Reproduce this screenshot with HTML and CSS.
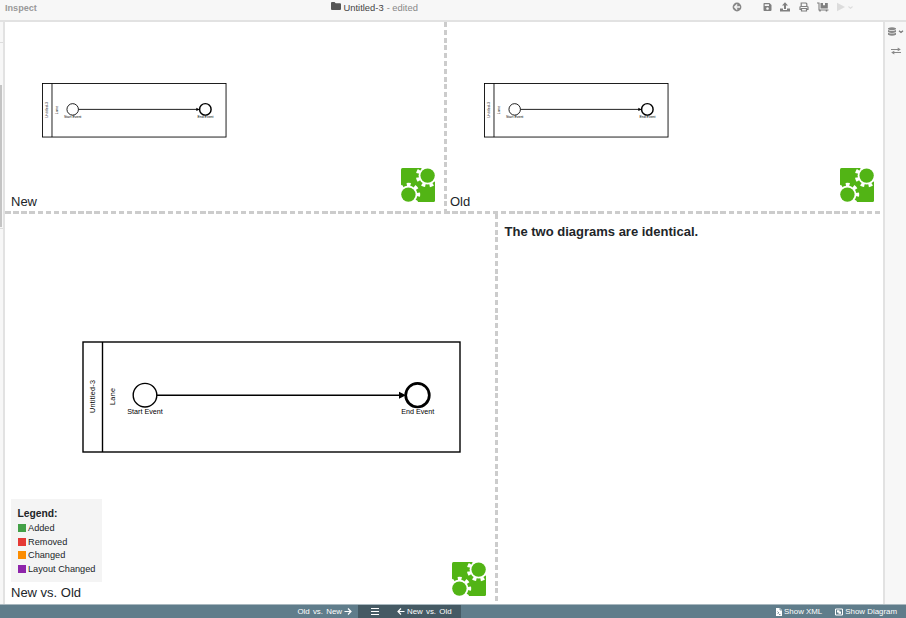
FILE: index.html
```html
<!DOCTYPE html>
<html lang="en">
<head>
<meta charset="utf-8">
<title>Inspect</title>
<link rel="stylesheet" href="styles.css">
</head>
<body>
<svg class="defs" width="0" height="0" aria-hidden="true">
  <symbol id="gears" viewBox="0 0 34 34">
    <path fill="#52b415" d="M1.500 0H20L34 14V32.500Q34 34 32.500 34H14L0 19V1.500Q0 0 1.500 0Z"/>
    <g fill="#fff">
      <circle cx="26.600" cy="7.600" r="9"/>
      <circle cx="7.400" cy="26.600" r="9"/>
    </g>
    <g fill="none" stroke="#fff" stroke-width="3.600" stroke-dasharray="3.700 4.154">
      <circle cx="26.600" cy="7.600" r="10" transform="rotate(12 26.600 7.600)"/>
      <circle cx="7.400" cy="26.600" r="10" transform="rotate(-10.600 7.400 26.600)"/>
    </g>
    <g fill="#52b415">
      <circle cx="26.600" cy="7.600" r="7.200"/>
      <circle cx="7.400" cy="26.600" r="7.200"/>
    </g>
  </symbol>
</svg>

<div class="app">
  <header class="topbar">
    <span class="brand">Inspect</span>
    <div class="doc">
      <svg width="10" height="8" viewBox="0 0 10 8"><path fill="#555" d="M0 1Q0 0 1 0H3.500L4.700 1.200H9Q10 1.200 10 2.200V7Q10 8 9 8H1Q0 8 0 7Z"/></svg>
      <span class="doc-name">Untitled-3</span><span class="doc-state">- edited</span>
    </div>
    <div class="tools">
      <svg class="back" width="10" height="10" viewBox="0 0 10 10"><circle cx="5" cy="5" r="4.400" fill="#888"/><path d="M8 5H2.700M5.200 2.500L2.700 5L5.200 7.500" fill="none" stroke="#f7f7f7" stroke-width="1.300"/></svg>
      <svg width="9" height="10" viewBox="0 0 9 10"><path fill="#808080" fill-rule="evenodd" d="M1.300 1H6.500L8.500 3V8Q8.500 9 7.500 9H1.300Q.5 9 .5 8V1.800Q.5 1 1.300 1ZM1.700 2.200V4H6V2.200ZM4.500 5.200A1.300 1.300 0 1 0 4.510 5.200Z"/></svg>
      <svg width="10" height="10" viewBox="0 0 10 10"><path fill="#808080" d="M5 .3L8 3.600H6V7H4V3.600H2ZM0 6.500H3V8H7V6.500H10V9.500H0Z"/></svg>
      <svg width="10" height="10" viewBox="0 0 10 10"><path fill="none" stroke="#808080" stroke-width="1.200" d="M2.200 4.500V1H7L7.800 1.800V4.500M2.200 7.300H1V5.200Q1 4.500 1.700 4.500H8.300Q9 4.500 9 5.200V7.300H7.800M2.500 6.500H7.500V9H2.500Z"/></svg>
      <svg width="12" height="10" viewBox="0 0 12 10"><path fill="none" stroke="#808080" stroke-width="1.100" d="M0 1H2V8H11.500"/><path fill="#808080" d="M3.500 1H6V3.500L7 3L8 3.500V1H10.800V6.500H3.500Z"/><circle cx="3" cy="8.700" r=".9" fill="#808080"/><circle cx="9.500" cy="8.700" r=".9" fill="#808080"/></svg>
      <svg class="run" width="17" height="10" viewBox="0 0 17 10"><path fill="#dcdcdc" d="M0 .8L8 5L0 9.200Z"/><path d="M11.500 4.500L13.500 6.300L15.500 4.500" fill="none" stroke="#dcdcdc" stroke-width="1.100"/></svg>
    </div>
  </header>

  <div class="body">
    <div class="gutter"><div class="gutter-head"></div><div class="gutter-scroll"></div><div class="gutter-foot"></div></div>
    <main class="workspace">
      <div class="row upper">
        <section class="pane pane-new">
          <svg class="diagram mini" viewBox="0 0 382 114">
            <rect x="1" y="1" width="377" height="110"/>
            <path d="M20.500 1v110"/>
            <circle cx="63" cy="54.200" r="11.800"/>
            <path d="M75 54.200H319"/>
            <circle class="end" cx="335.500" cy="54.200" r="11.800"/>
            <path class="tip" d="M317 50.700L324 54.200L317 57.700Z"/>
            <text transform="translate(13 55.500) rotate(-90)" textLength="33">Untitled-3</text>
            <text transform="translate(32.800 55.500) rotate(-90)" textLength="17">Lane</text>
            <text x="63" y="72.800" textLength="35.500">Start Event</text>
            <text x="335.800" y="72.800" textLength="33">End Event</text>
          </svg>
          <div class="pane-foot"><span class="caption">New</span><svg class="logo"><use href="#gears"/></svg></div>
        </section>
        <div class="split-v"></div>
        <section class="pane pane-old">
          <svg class="diagram mini" viewBox="0 0 382 114">
            <rect x="1" y="1" width="377" height="110"/>
            <path d="M20.500 1v110"/>
            <circle cx="63" cy="54.200" r="11.800"/>
            <path d="M75 54.200H319"/>
            <circle class="end" cx="335.500" cy="54.200" r="11.800"/>
            <path class="tip" d="M317 50.700L324 54.200L317 57.700Z"/>
            <text transform="translate(13 55.500) rotate(-90)" textLength="33">Untitled-3</text>
            <text transform="translate(32.800 55.500) rotate(-90)" textLength="17">Lane</text>
            <text x="63" y="72.800" textLength="35.500">Start Event</text>
            <text x="335.800" y="72.800" textLength="33">End Event</text>
          </svg>
          <div class="pane-foot"><span class="caption">Old</span><svg class="logo"><use href="#gears"/></svg></div>
        </section>
      </div>
      <div class="split-h"></div>
      <div class="row lower">
        <section class="pane pane-diff">
          <svg class="diagram large" viewBox="0 0 382 114">
            <rect x="1" y="1" width="377" height="110"/>
            <path d="M20.500 1v110"/>
            <circle cx="63" cy="54.200" r="11.800"/>
            <path d="M75 54.200H319"/>
            <circle class="end" cx="335.500" cy="54.200" r="11.800"/>
            <path class="tip" d="M317 50.700L324 54.200L317 57.700Z"/>
            <text transform="translate(13 55.500) rotate(-90)" textLength="33">Untitled-3</text>
            <text transform="translate(32.800 55.500) rotate(-90)" textLength="17">Lane</text>
            <text x="63" y="72.800" textLength="35.500">Start Event</text>
            <text x="335.800" y="72.800" textLength="33">End Event</text>
          </svg>
          <div class="pane-foot">
            <div>
              <div class="legend">
                <h2>Legend:</h2>
                <ul>
                  <li><i class="added"></i>Added</li>
                  <li><i class="removed"></i>Removed</li>
                  <li><i class="changed"></i>Changed</li>
                  <li><i class="layout"></i>Layout Changed</li>
                </ul>
              </div>
              <span class="caption">New vs. Old</span>
            </div>
            <svg class="logo"><use href="#gears"/></svg>
          </div>
        </section>
        <div class="split-v"></div>
        <section class="pane result"><h1>The two diagrams are identical.</h1></section>
      </div>
    </main>
    <aside class="rail">
      <svg width="16" height="9" viewBox="0 0 16 9"><path fill="#888" d="M0 1.200Q4 -.8 8 1.200V2.200Q4 4 0 2.200ZM0 2.900Q4 4.700 8 2.900V5Q4 6.800 0 5ZM0 5.700Q4 7.500 8 5.700V7.700Q4 9.700 0 7.700Z"/><path d="M11 3.700L13 5.500L15 3.700" fill="none" stroke="#777" stroke-width="1.200"/></svg>
      <svg class="swap" width="10" height="8" viewBox="0 0 10 8"><path d="M0 2.500H7M10 5.500H3" fill="none" stroke="#888" stroke-width="1.100"/><path fill="#888" d="M6.700 .5L9.800 2.500L6.700 4.300ZM3.300 3.700L.2 5.500L3.300 7.500Z"/></svg>
    </aside>
  </div>

  <footer class="statusbar">
    <div class="old-new">Old vs. New <svg width="8" height="8" viewBox="0 0 8 8"><path d="M.5 3.500H7M4 .5L7 3.500L4 6.500" fill="none" stroke="#fff" stroke-width="1.200"/></svg></div>
    <div class="active">
      <svg width="8" height="7" viewBox="0 0 8 7"><path d="M0 .5H8M0 3.500H8M0 6.500H8" stroke="#fff"/></svg>
      <span class="new-old"><svg width="8" height="8" viewBox="0 0 8 8"><path d="M7.500 3.500H1M4 .5L1 3.500L4 6.500" fill="none" stroke="#fff" stroke-width="1.200"/></svg>New vs. Old</span>
    </div>
    <div class="actions">
      <span><svg width="6" height="8" viewBox="0 0 6 8"><path fill="#fff" d="M0 0H4L6 2V8H0Z"/><path d="M1.500 3.500L3 5M1.500 6L2.500 5M3 6.500H4.500M4 0V2H6" fill="none" stroke="#607d8b" stroke-width=".8"/></svg>Show XML</span>
      <span><svg width="8" height="8" viewBox="0 0 8 8"><path d="M.5 1H7.500V7H.5Z" fill="none" stroke="#fff"/><path fill="#fff" d="M2 2.200H4.500V3.500H6V5.800H3.500V4.500H2Z"/></svg>Show Diagram</span>
    </div>
  </footer>
</div>
</body>
</html>
```
FILE: styles.css
```css
* { box-sizing: border-box; }
body {
  margin: 0;
  font-family: "Liberation Sans", Arial, sans-serif;
  color: #212529;
  background: #fff;
}
svg { display: block; flex: none; }
.defs { position: absolute; }
.app {
  width: 906px;
  height: 618px;
  display: grid;
  grid-template-rows: 22px 1fr 14px;
  overflow: hidden;
}
.topbar {
  display: grid;
  grid-template-columns: 331px 1fr 174px;
  background: #f7f7f7;
  border-bottom: 2px solid #e2e2e2;
  height: 22px;
}
.brand {
  padding-left: 5px;
  font-size: 9.1px;
  line-height: 16px;
  font-weight: bold;
  color: #999;
}
.doc {
  display: flex;
  align-items: center;
  height: 14px;
  font-size: 9.4px;
  color: #888;
}
.doc svg { margin-top: -2px; }
.doc-name { margin: 0 3px 0 2.500px; color: #444; }
.tools {
  display: flex;
  align-items: center;
  gap: 8.4px;
  height: 14px;
}
.back { margin-right: 12.500px; }
.body {
  display: grid;
  grid-template-columns: 5px 878px 23px;
  min-height: 0;
}
.gutter {
  background: #f7f7f7;
  border-right: 2px solid #e2e2e2;
  display: flex;
  flex-direction: column;
}
.gutter-head { height: 21px; border-bottom: 1px solid #ddd; }
.gutter-scroll {
  width: 1.5px;
  height: 142px;
  margin-top: 42px;
  background: #c4c4c4;
}
.gutter-foot { border-bottom: 1px solid #ddd; height: 2px; }
.workspace {
  display: grid;
  grid-template-rows: 189px 3px 1fr;
  min-height: 0;
}
.row { display: grid; min-height: 0; }
.upper { grid-template-columns: 439px 3px 1fr; }
.lower { grid-template-columns: 490px 3px 1fr; }
.split-v { background: repeating-linear-gradient(to bottom, #ccc 0 5px, #fff 5px 7.8px); }
.split-h { background: repeating-linear-gradient(to right, #ccc 0 5.500px, #fff 5.500px 8.130px); }
.pane {
  display: flex;
  flex-direction: column;
  justify-content: space-between;
}
.diagram { fill: none; stroke: #000; stroke-width: 1.4; overflow: visible; }
.diagram .end { stroke-width: 2.7; }
.diagram .tip { fill: #000; stroke: none; }
.diagram text {
  fill: #000;
  stroke: none;
  font-size: 7.2px;
  text-anchor: middle;
}
.mini {
  width: 186px;
  height: 55.5px;
  margin: 61px 0 0 37px;
  stroke-width: 1.800;
}
.mini .end { stroke-width: 3; }
.large { width: 382px; height: 114px; margin: 127px 0 0 77px; }
.pane-foot {
  display: flex;
  justify-content: space-between;
  align-items: flex-end;
  padding: 0 9.500px 1px 6px;
}
.pane-old .pane-foot { padding: 0 9.500px 1px 3px; }
.pane-diff .pane-foot { padding: 0 9.500px 3px 6px; }
.logo { width: 34px; height: 34px; margin-bottom: 8px; }
.pane-diff .logo { margin-bottom: 5.500px; }
.caption { display: block; font-size: 13px; line-height: 16px; }
.legend {
  width: 91px;
  height: 83px;
  padding: 7px 0 0 6.500px;
  margin-bottom: 3px;
  background: #f4f4f4;
}
.legend h2 { margin: 0; font-size: 10.300px; line-height: 15px; }
.legend ul { list-style: none; margin: 0; padding: 0; }
.legend li {
  display: flex;
  align-items: center;
  height: 13.700px;
  font-size: 9.200px;
  white-space: nowrap;
}
.legend i { width: 8px; height: 8px; margin-right: 2.500px; }
.added { background: #43a047; }
.removed { background: #e53935; }
.changed { background: #fb8c00; }
.layout { background: #8e24aa; }
.result h1 { margin: 10px 0 0 6.500px; font-size: 13px; line-height: 16px; }
.rail {
  padding: 5px 0 0 3px;
  background: #f7f7f7;
  border-left: 2px solid #e2e2e2;
}
.swap { margin: 11px 0 0 3px; }
.statusbar {
  display: grid;
  grid-template-columns: 358px 103px 1fr;
  background: #607d8b;
  border-top: 1px solid #a9b8bf;
  color: #fff;
  font-size: 7.900px;
  line-height: 12px;
  white-space: nowrap;
}
.old-new {
  display: flex;
  justify-content: flex-end;
  align-items: center;
  gap: 2px;
  padding-right: 6px;
  word-spacing: 1px;
}
.active {
  display: flex;
  align-items: center;
  gap: 18px;
  padding-left: 13px;
  background: #455a64;
  word-spacing: 1px;
}
.new-old { display: flex; align-items: center; gap: 2px; }
.actions {
  display: flex;
  justify-content: flex-end;
  gap: 13px;
  padding-right: 9px;
}
.actions span { display: flex; align-items: center; gap: 2px; }
```
